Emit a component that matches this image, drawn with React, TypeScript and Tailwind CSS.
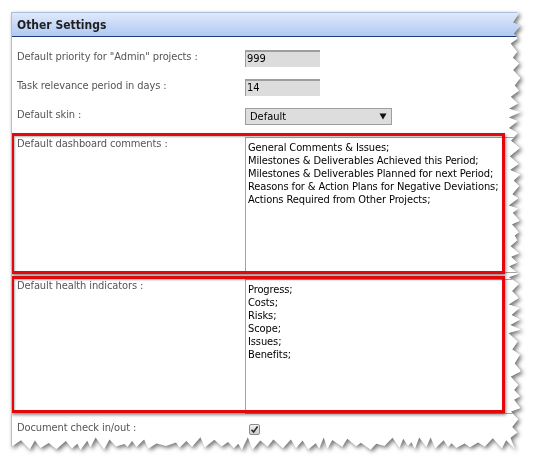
import React from "react";

function tornClip(W: number, H: number): string {
  let s = 11;
  const rnd = () => {
    s = (s * 9301 + 49297) % 233280;
    return s / 233280;
  };
  const pts: string[] = [];
  pts.push(`0px 0px`);
  pts.push(`${W - 6}px 0px`);
  let y = 2;
  let i = 0;
  while (y < H - 12) {
    const x = i % 2 === 0 ? W - 2 - rnd() * 4 : W - 8 - rnd() * 7;
    pts.push(`${x.toFixed(1)}px ${y.toFixed(1)}px`);
    y += 3 + rnd() * 6;
    i++;
  }
  let x = W - 8;
  i = 0;
  while (x > 2) {
    const yy = i % 2 === 0 ? H - 2 - rnd() * 4 : H - 8 - rnd() * 7;
    pts.push(`${x.toFixed(1)}px ${yy.toFixed(1)}px`);
    x -= 3 + rnd() * 7;
    i++;
  }
  pts.push(`0px ${H - 5}px`);
  return `polygon(${pts.join(", ")})`;
}

const font = "font-['DejaVu_Sans_Condensed','Liberation_Sans',sans-serif]";

function Label({ children }: { children: React.ReactNode }) {
  return (
    <div className="w-[233px] shrink-0 pl-[5px] text-[11px] leading-[14px] tracking-[-0.1px] text-[#555555]">
      {children}
    </div>
  );
}

function TextBox({ lines, h }: { lines: string[]; h: string }) {
  return (
    <div
      className={`${h} w-[276px] border border-[#a3a3a3] bg-white px-[2px] pt-[3px] text-[11px] leading-[13px] tracking-[-0.1px] text-black`}
    >
      {lines.map((l) => (
        <div key={l} className="whitespace-nowrap">
          {l}
        </div>
      ))}
    </div>
  );
}

function RedBox({ className }: { className: string }) {
  return (
    <div
      className={`pointer-events-none absolute border-[3px] border-[#e3080b] shadow-[1px_2px_3px_rgba(0,0,0,0.45),inset_1px_1px_2px_rgba(0,0,0,0.3)] ${className}`}
    />
  );
}

export default function App() {
  const W = 512;
  const H = 440;
  return (
    <div className={`h-[467px] w-[538px] bg-white pl-[11px] pt-[12px] ${font}`}>
      <div className="h-[440px] w-[512px] drop-shadow-[2px_2px_2px_rgba(0,0,0,0.55)]">
        <div
          className="h-full w-full overflow-hidden border-l border-t border-[#a9bfdc] bg-white"
          style={{ clipPath: tornClip(W, H) }}
        >
          {/* header */}
          <div className="flex h-[24px] items-center border-b border-[#1d3b7a] bg-gradient-to-b from-[#dfe9fb] to-[#b0c9f3] pl-[5px] text-[12px] font-bold text-[#1f1f1f]">
            Other Settings
          </div>

          <div className="pt-[13px]">
            {/* row 1 */}
            <div className="flex h-[29px] items-start">
              <Label>Default priority for "Admin" projects :</Label>
              <div className="h-[17px] w-[75px] border-l border-t-2 border-[#9e9e9e] border-b-[#e2e2e2] border-r-[#e2e2e2] bg-[#dcdcdc] pl-[1px] text-[11px] leading-[14px] text-black">
                999
              </div>
            </div>
            {/* row 2 */}
            <div className="flex h-[29px] items-start">
              <Label>Task relevance period in days :</Label>
              <div className="h-[17px] w-[75px] border-l border-t-2 border-[#9e9e9e] border-b-[#e2e2e2] border-r-[#e2e2e2] bg-[#dcdcdc] pl-[1px] text-[11px] leading-[14px] text-black">
                14
              </div>
            </div>
            {/* row 3 */}
            <div className="flex h-[26px] items-start">
              <Label>Default skin :</Label>
              <div className="flex h-[17px] w-[147px] items-center justify-between border border-[#9e9e9e] bg-[#dddddd] pl-[4px] pr-[4px] text-[11px] leading-[14px] text-black">
                <span>Default</span>
                <svg width="8" height="7" viewBox="0 0 8 7">
                  <path d="M0.5 0.5 L7.5 0.5 L4 6.5 Z" fill="#111" />
                </svg>
              </div>
            </div>

            {/* row 4 */}
            <div className="relative flex h-[142px] items-start pt-[3px]">
              <Label>Default dashboard comments :</Label>
              <TextBox
                h="h-[136px]"
                lines={[
                  "General Comments & Issues;",
                  "Milestones & Deliverables Achieved this Period;",
                  "Milestones & Deliverables Planned for next Period;",
                  "Reasons for & Action Plans for Negative Deviations;",
                  "Actions Required from Other Projects;",
                ]}
              />
              <RedBox className="left-[-1px] top-[-1px] h-[141px] w-[494px]" />
            </div>

            {/* row 5 */}
            <div className="relative flex h-[140px] items-start pt-[3px]">
              <Label>Default health indicators :</Label>
              <TextBox
                h="h-[135px]"
                lines={["Progress;", "Costs;", "Risks;", "Scope;", "Issues;", "Benefits;"]}
              />
              <RedBox className="left-[-1px] top-0 h-[137px] w-[494px]" />
            </div>

            {/* row 6 */}
            <div className="flex items-start pt-[5px]">
              <Label>Document check in/out :</Label>
              <div className="ml-[4px] mt-[3px] flex h-[11px] w-[11px] items-center justify-center rounded-[2px] border border-[#8c8c8c] bg-gradient-to-b from-[#f0f0f0] to-[#cfcfcf]">
                <svg width="9" height="9" viewBox="0 0 9 9">
                  <path d="M1.5 4.8 L3.6 7 L7.6 1.6" stroke="#2a2a2a" strokeWidth="1.6" fill="none" />
                </svg>
              </div>
            </div>
          </div>
        </div>
      </div>
    </div>
  );
}
